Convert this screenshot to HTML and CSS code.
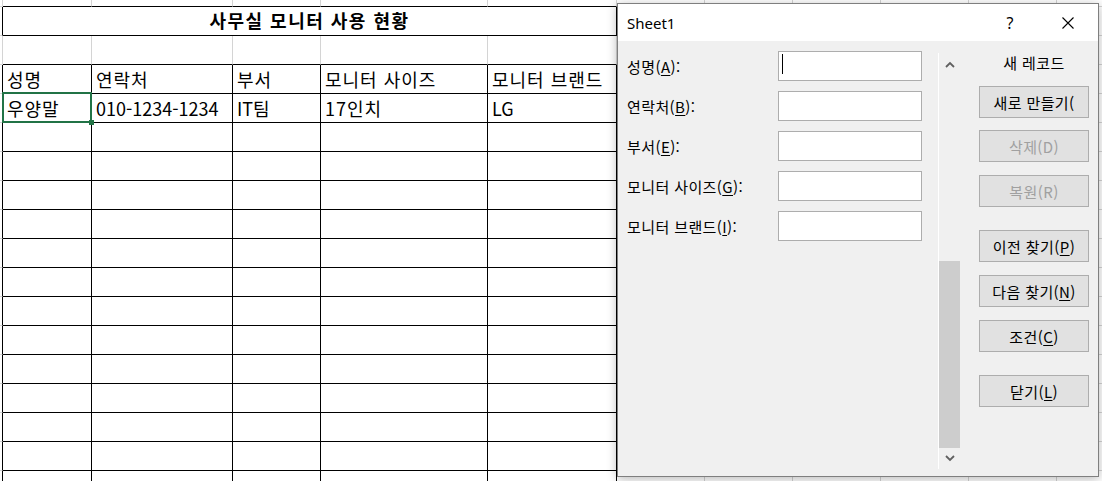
FILE: index.html
```html
<!DOCTYPE html>
<html lang="ko">
<head>
<meta charset="utf-8">
<title>사무실 모니터 사용 현황</title>
<link rel="stylesheet" href="styles.css">
</head>
<body>
<div class="sheet">
  <!-- row 0 (partial) -->
  <div class="c"></div><div class="c kb"></div><div class="c kb"></div><div class="c kb"></div><div class="c kb"></div><div class="c kb"></div><div class="c"></div><div class="c"></div><div class="c"></div><div class="c"></div><div class="c"></div><div class="c"></div>
  <!-- row 1 title -->
  <div class="c kr"></div><div class="c kr kb t title">사무실 모니터 사용 현황</div><div class="c"></div><div class="c"></div><div class="c"></div><div class="c"></div><div class="c"></div><div class="c"></div>
  <!-- row 2 -->
  <div class="c"></div><div class="c kb"></div><div class="c kb"></div><div class="c kb"></div><div class="c kb"></div><div class="c kb"></div><div class="c"></div><div class="c"></div><div class="c"></div><div class="c"></div><div class="c"></div><div class="c"></div>
  <!-- row 3 header -->
  <div class="c kr"></div><div class="c kr kb t ls">성명</div><div class="c kr kb t ls">연락처</div><div class="c kr kb t ls">부서</div><div class="c kr kb t ls">모니터 사이즈</div><div class="c kr kb t ls">모니터 브랜드</div><div class="c"></div><div class="c"></div><div class="c"></div><div class="c"></div><div class="c"></div><div class="c"></div>
  <!-- row 4 data -->
  <div class="c kr"></div><div class="c kr kb t ls sel">우양말</div><div class="c kr kb t">010-1234-1234</div><div class="c kr kb t">IT팀</div><div class="c kr kb t ls">17인치</div><div class="c kr kb t">LG</div><div class="c"></div><div class="c"></div><div class="c"></div><div class="c"></div><div class="c"></div><div class="c"></div>
  <!-- rows 5-17 -->
  <div class="c kr"></div><div class="c kr kb"></div><div class="c kr kb"></div><div class="c kr kb"></div><div class="c kr kb"></div><div class="c kr kb"></div><div class="c"></div><div class="c"></div><div class="c"></div><div class="c"></div><div class="c"></div><div class="c"></div>
  <div class="c kr"></div><div class="c kr kb"></div><div class="c kr kb"></div><div class="c kr kb"></div><div class="c kr kb"></div><div class="c kr kb"></div><div class="c"></div><div class="c"></div><div class="c"></div><div class="c"></div><div class="c"></div><div class="c"></div>
  <div class="c kr"></div><div class="c kr kb"></div><div class="c kr kb"></div><div class="c kr kb"></div><div class="c kr kb"></div><div class="c kr kb"></div><div class="c"></div><div class="c"></div><div class="c"></div><div class="c"></div><div class="c"></div><div class="c"></div>
  <div class="c kr"></div><div class="c kr kb"></div><div class="c kr kb"></div><div class="c kr kb"></div><div class="c kr kb"></div><div class="c kr kb"></div><div class="c"></div><div class="c"></div><div class="c"></div><div class="c"></div><div class="c"></div><div class="c"></div>
  <div class="c kr"></div><div class="c kr kb"></div><div class="c kr kb"></div><div class="c kr kb"></div><div class="c kr kb"></div><div class="c kr kb"></div><div class="c"></div><div class="c"></div><div class="c"></div><div class="c"></div><div class="c"></div><div class="c"></div>
  <div class="c kr"></div><div class="c kr kb"></div><div class="c kr kb"></div><div class="c kr kb"></div><div class="c kr kb"></div><div class="c kr kb"></div><div class="c"></div><div class="c"></div><div class="c"></div><div class="c"></div><div class="c"></div><div class="c"></div>
  <div class="c kr"></div><div class="c kr kb"></div><div class="c kr kb"></div><div class="c kr kb"></div><div class="c kr kb"></div><div class="c kr kb"></div><div class="c"></div><div class="c"></div><div class="c"></div><div class="c"></div><div class="c"></div><div class="c"></div>
  <div class="c kr"></div><div class="c kr kb"></div><div class="c kr kb"></div><div class="c kr kb"></div><div class="c kr kb"></div><div class="c kr kb"></div><div class="c"></div><div class="c"></div><div class="c"></div><div class="c"></div><div class="c"></div><div class="c"></div>
  <div class="c kr"></div><div class="c kr kb"></div><div class="c kr kb"></div><div class="c kr kb"></div><div class="c kr kb"></div><div class="c kr kb"></div><div class="c"></div><div class="c"></div><div class="c"></div><div class="c"></div><div class="c"></div><div class="c"></div>
  <div class="c kr"></div><div class="c kr kb"></div><div class="c kr kb"></div><div class="c kr kb"></div><div class="c kr kb"></div><div class="c kr kb"></div><div class="c"></div><div class="c"></div><div class="c"></div><div class="c"></div><div class="c"></div><div class="c"></div>
  <div class="c kr"></div><div class="c kr kb"></div><div class="c kr kb"></div><div class="c kr kb"></div><div class="c kr kb"></div><div class="c kr kb"></div><div class="c"></div><div class="c"></div><div class="c"></div><div class="c"></div><div class="c"></div><div class="c"></div>
  <div class="c kr"></div><div class="c kr kb"></div><div class="c kr kb"></div><div class="c kr kb"></div><div class="c kr kb"></div><div class="c kr kb"></div><div class="c"></div><div class="c"></div><div class="c"></div><div class="c"></div><div class="c"></div><div class="c"></div>
  <div class="c kr"></div><div class="c kr kb"></div><div class="c kr kb"></div><div class="c kr kb"></div><div class="c kr kb"></div><div class="c kr kb"></div><div class="c"></div><div class="c"></div><div class="c"></div><div class="c"></div><div class="c"></div><div class="c"></div>
</div>

<div class="dialog">
  <div class="titlebar">
    <span class="wtitle">Sheet1</span>
    <span class="cap help">?</span>
    <span class="cap close">
      <svg width="12" height="12" viewBox="0 0 12 12"><path d="M0.5 0.5 L11.5 11.5 M11.5 0.5 L0.5 11.5" stroke="#000" stroke-width="1.1" fill="none"/></svg>
    </span>
  </div>
  <div class="dbody">
    <div class="fields">
      <div class="field"><span class="lbl">성명(<u>A</u>):</span><div class="tb"><span class="caret"></span></div></div>
      <div class="field"><span class="lbl">연락처(<u>B</u>):</span><div class="tb"></div></div>
      <div class="field"><span class="lbl">부서(<u>E</u>):</span><div class="tb"></div></div>
      <div class="field"><span class="lbl">모니터 사이즈(<u>G</u>):</span><div class="tb"></div></div>
      <div class="field"><span class="lbl">모니터 브랜드(<u>I</u>):</span><div class="tb"></div></div>
    </div>
    <div class="scroll">
      <div class="sarrow up">
        <svg width="10" height="7" viewBox="0 0 10 7"><polyline points="1,6 5,2 9,6" stroke="#606060" stroke-width="1.8" fill="none"/></svg>
      </div>
      <div class="track"><div class="thumb"></div></div>
      <div class="sarrow down">
        <svg width="10" height="7" viewBox="0 0 10 7"><polyline points="1,1 5,5 9,1" stroke="#606060" stroke-width="1.8" fill="none"/></svg>
      </div>
    </div>
    <div class="panel">
      <div class="rec">새 레코드</div>
      <button class="btn first">새로 만들기(</button>
      <button class="btn dis g12">삭제(D)</button>
      <button class="btn dis">복원(R)</button>
      <button class="btn big">이전 찾기(<u>P</u>)</button>
      <button class="btn">다음 찾기(<u>N</u>)</button>
      <button class="btn">조건(<u>C</u>)</button>
      <button class="btn big">닫기(<u>L</u>)</button>
    </div>
  </div>
</div>
</body>
</html>
```

FILE: styles.css
```css
html, body {
  margin: 0;
  padding: 0;
}

body {
  width: 1102px;
  height: 481px;
  overflow: hidden;
  position: relative;
  background: #ffffff;
  font-family: "Noto Sans CJK KR", "Noto Sans", sans-serif;
  color: #000;
}

/* ---------- spreadsheet ---------- */
.sheet {
  display: grid;
  grid-template-columns: 3px 89px 141px 88px 167px 129px repeat(6, 88px);
  grid-template-rows: 7px repeat(17, 29px);
  width: 1145px;
}

.c {
  box-sizing: border-box;
  border-right: 1px solid #d4d4d4;
  border-bottom: 1px solid #d4d4d4;
  min-width: 0;
}

.kr { border-right-color: #000; }
.kb { border-bottom-color: #000; }

.t {
  display: flex;
  align-items: center;
  padding-left: 4px;
  font-size: 18px;
  white-space: nowrap;
  overflow: visible;
}

.ls {
  letter-spacing: 1px;
}

.title {
  grid-column: span 5;
  justify-content: center;
  padding-left: 0;
  font-weight: bold;
  letter-spacing: 1.5px;
  padding-bottom: 2px;
}

.sel {
  position: relative;
}

.sel::before {
  content: "";
  position: absolute;
  left: -1px;
  top: -2px;
  right: -1px;
  bottom: -1px;
  border: 2px solid #217346;
}

.sel::after {
  content: "";
  position: absolute;
  right: -3px;
  bottom: -3px;
  width: 5px;
  height: 5px;
  background: #217346;
}

/* ---------- dialog ---------- */
.dialog {
  position: absolute;
  left: 617px;
  top: 3px;
  width: 482px;
  height: 474px;
  box-sizing: border-box;
  border: 1px solid #7f7f7f;
  background: #f0f0f0;
  box-shadow: 0 2px 10px rgba(0, 0, 0, 0.28);
  display: flex;
  flex-direction: column;
  font-size: 15px;
  letter-spacing: 0.4px;
}

.titlebar {
  height: 37px;
  flex: none;
  background: #ffffff;
  display: flex;
  align-items: center;
  padding-left: 9px;
  padding-right: 7px;
  letter-spacing: 0;
}

.wtitle {
  font-family: "Noto Sans", sans-serif;
  font-size: 15px;
}

.cap {
  width: 46px;
  height: 37px;
  display: flex;
  align-items: center;
  justify-content: center;
}

.help {
  margin-left: auto;
  font-family: "Noto Sans", sans-serif;
  font-size: 16px;
}

.close {
  margin-left: 12px;
}

.dbody {
  flex: 1;
  display: flex;
  padding-left: 9px;
}

.fields {
  width: 295px;
  padding-top: 10px;
  display: flex;
  flex-direction: column;
  gap: 10px;
}

.field {
  display: flex;
  align-items: center;
  height: 30px;
}

.lbl {
  width: 151px;
  white-space: nowrap;
}

u {
  text-decoration-thickness: 1px;
  text-underline-offset: 2px;
}

.tb {
  width: 144px;
  height: 30px;
  box-sizing: border-box;
  background: #ffffff;
  border: 1px solid #adadad;
  position: relative;
}

.caret {
  position: absolute;
  left: 3px;
  top: 2px;
  width: 1px;
  height: 20px;
  background: #000;
}

.scroll {
  margin-left: 16px;
  margin-top: 12px;
  width: 22px;
  height: 416px;
  box-sizing: border-box;
  border-left: 1px solid #ffffff;
  display: flex;
  flex-direction: column;
}

.sarrow {
  display: flex;
  align-items: center;
  justify-content: center;
}

.sarrow.up { height: 22px; }
.sarrow.down { height: 21px; }

.track {
  flex: 1;
  display: flex;
  flex-direction: column;
  justify-content: flex-end;
}

.thumb {
  height: 187px;
  background: #cdcdcd;
}

.panel {
  width: 138px;
  padding-left: 19px;
  box-sizing: border-box;
  display: flex;
  flex-direction: column;
  align-items: flex-start;
}

.rec {
  margin-top: 12px;
  width: 110px;
  line-height: 20px;
  text-align: center;
}

.btn {
  width: 110px;
  height: 32px;
  box-sizing: border-box;
  margin: 13px 0 0 0;
  padding: 0;
  border: 1px solid #adadad;
  background: #e1e1e1;
  font: inherit;
  font-size: 15px;
  letter-spacing: 0.4px;
  color: #000;
  white-space: nowrap;
}

.btn.g12 { margin-top: 12px; }
.btn.big { margin-top: 23px; }
.btn.dis { color: #a0a0a0; }
```
